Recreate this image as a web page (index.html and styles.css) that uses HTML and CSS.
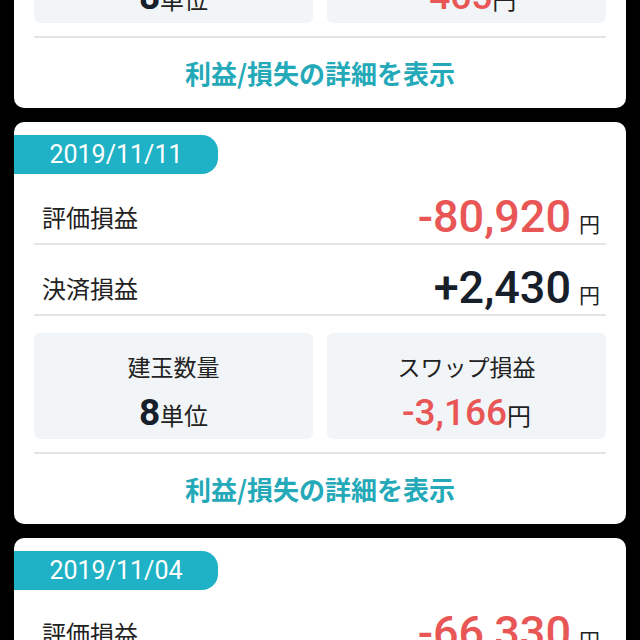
FILE: index.html
```html
<!DOCTYPE html>
<html lang="ja">
<head>
    <meta charset="UTF-8">
    <meta name="viewport" content="width=device-width, initial-scale=1.0">
    <title>損益履歴</title>
    <link rel="stylesheet" href="styles.css">
</head>
<body>
    <div class="feed">
        <div class="card">
            <div class="date-tab">2019/11/18</div>
            <div class="row">
                <span class="row-label">評価損益</span>
                <span class="row-value"><span class="num minus">-78,490</span><span class="yen">円</span></span>
            </div>
            <div class="row">
                <span class="row-label">決済損益</span>
                <span class="row-value"><span class="num">+0</span><span class="yen">円</span></span>
            </div>
            <div class="stats">
                <div class="stat">
                    <div class="stat-label">建玉数量</div>
                    <div class="stat-value"><span class="stat-num">8</span>単位</div>
                </div>
                <div class="stat">
                    <div class="stat-label">スワップ損益</div>
                    <div class="stat-value"><span class="stat-num minus light">-465</span>円</div>
                </div>
            </div>
            <a class="detail-link" href="#">利益/損失の詳細を表示</a>
        </div>

        <div class="card">
            <div class="date-tab">2019/11/11</div>
            <div class="row">
                <span class="row-label">評価損益</span>
                <span class="row-value"><span class="num minus">-80,920</span><span class="yen">円</span></span>
            </div>
            <div class="row">
                <span class="row-label">決済損益</span>
                <span class="row-value"><span class="num">+2,430</span><span class="yen">円</span></span>
            </div>
            <div class="stats">
                <div class="stat">
                    <div class="stat-label">建玉数量</div>
                    <div class="stat-value"><span class="stat-num">8</span>単位</div>
                </div>
                <div class="stat">
                    <div class="stat-label">スワップ損益</div>
                    <div class="stat-value"><span class="stat-num minus light">-3,166</span>円</div>
                </div>
            </div>
            <a class="detail-link" href="#">利益/損失の詳細を表示</a>
        </div>

        <div class="card">
            <div class="date-tab">2019/11/04</div>
            <div class="row">
                <span class="row-label">評価損益</span>
                <span class="row-value"><span class="num minus">-66,330</span><span class="yen">円</span></span>
            </div>
            <div class="row">
                <span class="row-label">決済損益</span>
                <span class="row-value"><span class="num">+1,820</span><span class="yen">円</span></span>
            </div>
        </div>
    </div>
</body>
</html>
```

FILE: styles.css
```css
body {
    margin: 0;
    padding: 0;
    background-color: #000;
    font-family: "Noto Sans CJK JP", sans-serif;
    color: #1f2328;
    height: 640px;
    overflow: hidden;
}
.feed {
    display: flex;
    flex-direction: column;
    gap: 14px;
    padding: 0 14px;
    margin-top: -294px;
}
.card {
    background-color: #fff;
    border-radius: 10px;
    padding: 13px 0 0;
    overflow: hidden;
}
.date-tab {
    width: 204px;
    height: 39px;
    line-height: 39px;
    background-color: #1fb2c6;
    border-radius: 0 16px 16px 0;
    color: #fff;
    font-family: Roboto, sans-serif;
    font-size: 25px;
    text-align: center;
}
.row {
    display: flex;
    justify-content: space-between;
    align-items: center;
    height: 52px;
    margin: 0 20px;
    padding: 17px 6px 0 8px;
    border-bottom: 2px solid #e2e6e9;
}
.row-label {
    font-size: 24px;
    line-height: 30px;
    color: #222;
}
.row-value {
    display: flex;
    align-items: baseline;
}
.num {
    font-family: Roboto, sans-serif;
    font-weight: 500;
    font-size: 45px;
    line-height: 52px;
    color: #17202a;
}
.minus {
    color: #e85656;
}
.yen {
    font-size: 21px;
    margin-left: 8px;
    color: #222;
}
.stats {
    display: grid;
    grid-template-columns: 1fr 1fr;
    gap: 14px;
    margin: 17px 20px 13px;
}
.stat {
    height: 88px;
    padding: 18px 0 0;
    background-color: #f2f5f7;
    border-radius: 6px;
    text-align: center;
}
.stat-label {
    font-size: 23px;
    line-height: 30px;
    color: #222;
}
.stat-value {
    margin-top: 12px;
    font-size: 24px;
    line-height: 40px;
    color: #222;
}
.stat-num {
    font-family: Roboto, sans-serif;
    font-weight: 700;
    font-size: 37px;
    color: #17202a;
}
.stat-num.light {
    font-weight: 500;
    color: #e85656;
}
.detail-link {
    display: block;
    margin: 0 20px;
    height: 70px;
    line-height: 70px;
    border-top: 2px solid #e2e6e9;
    text-align: center;
    font-size: 26px;
    font-weight: 700;
    color: #24a9b8;
    text-decoration: none;
}
```
